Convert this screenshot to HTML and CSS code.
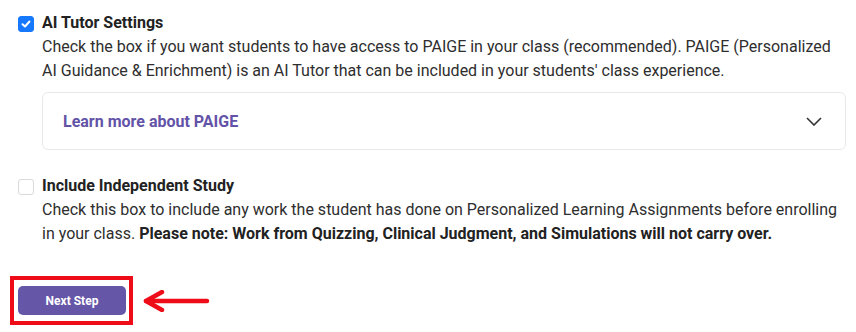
FILE: index.html
```html
<!DOCTYPE html>
<html lang="en">
<head>
    <meta charset="UTF-8" />
    <meta name="viewport" content="width=device-width, initial-scale=1" />
    <title>Class Settings</title>
    <link rel="stylesheet" href="styles.css">
</head>
<body>
    <div class="setting">
        <span class="checkbox checked">
            <svg width="10" height="8" viewBox="0 0 10 8"><path d="M1.5 4.2 L4 6.5 L8.5 1.5" fill="none" stroke="#fff" stroke-width="2" stroke-linecap="round" stroke-linejoin="round"/></svg>
        </span>
        <div class="setting-body">
            <div class="setting-title">AI Tutor Settings</div>
            <div class="setting-text">Check the box if you want students to have access to PAIGE in your class (recommended). PAIGE (Personalized AI Guidance &amp; Enrichment) is an AI Tutor that can be included in your students' class experience.</div>
            <div class="accordion">
                <span class="accordion-label">Learn more about PAIGE</span>
                <svg class="chevron" width="16" height="9" viewBox="0 0 16 9"><path d="M1 1 L8 8 L15 1" fill="none" stroke="#333" stroke-width="1.6"/></svg>
            </div>
        </div>
    </div>

    <div class="setting second">
        <span class="checkbox"></span>
        <div class="setting-body">
            <div class="setting-title">Include Independent Study</div>
            <div class="setting-text">Check this box to include any work the student has done on Personalized Learning Assignments before enrolling in your class. <strong>Please note: Work from Quizzing, Clinical Judgment, and Simulations will not carry over.</strong></div>
        </div>
    </div>

    <div class="actions">
        <div class="highlight">
            <button class="next-btn">Next Step</button>
        </div>
        <svg class="arrow" width="70" height="22" viewBox="0 0 70 22">
            <path d="M4 11 L65 11" stroke="#ee0c18" stroke-width="4.5" stroke-linecap="round"/>
            <path d="M20 2 L4 11 L20 20" fill="none" stroke="#ee0c18" stroke-width="4.5" stroke-linecap="round" stroke-linejoin="round"/>
        </svg>
    </div>
</body>
</html>
```

FILE: styles.css
```css
body {
    font-family: Roboto, "Liberation Sans", Arial, sans-serif;
    color: #2e2e2e;
    background-color: #fff;
    margin: 0;
    padding: 11px 10px 0 18px;
}
.setting {
    display: flex;
    gap: 8px;
}
.setting.second {
    margin-top: 24px;
}
.checkbox {
    flex: none;
    width: 16px;
    height: 16px;
    margin-top: 5px;
    box-sizing: border-box;
    border: 1px solid #d9d9d9;
    border-radius: 3px;
    display: flex;
    align-items: center;
    justify-content: center;
}
.checkbox.checked {
    background-color: #1677ff;
    border-color: #1677ff;
}
.setting-body {
    flex: 1;
}
.setting-title {
    font-size: 16px;
    font-weight: 700;
    line-height: 24px;
    color: #222;
}
.setting-text {
    font-size: 16px;
    line-height: 24px;
}
.setting-text strong {
    color: #222;
}
.accordion {
    margin-top: 9px;
    height: 58px;
    box-sizing: border-box;
    border: 1px solid #e8e8e8;
    border-radius: 6px;
    padding: 0 23px 0 20px;
    display: flex;
    align-items: center;
    justify-content: space-between;
}
.accordion-label {
    color: #6353a8;
    font-size: 16px;
    font-weight: 700;
}
.actions {
    margin-top: 30px;
    margin-left: -8px;
    display: flex;
    align-items: center;
    gap: 9px;
}
.highlight {
    border: 4px solid #ee0c18;
    padding: 6px 3px 6px 4px;
}
.next-btn {
    display: block;
    width: 108px;
    height: 29px;
    border: none;
    border-radius: 5px;
    background-color: #6656a8;
    color: #fff;
    font-family: Roboto, "Liberation Sans", Arial, sans-serif;
    font-size: 12px;
    font-weight: 700;
}
```
